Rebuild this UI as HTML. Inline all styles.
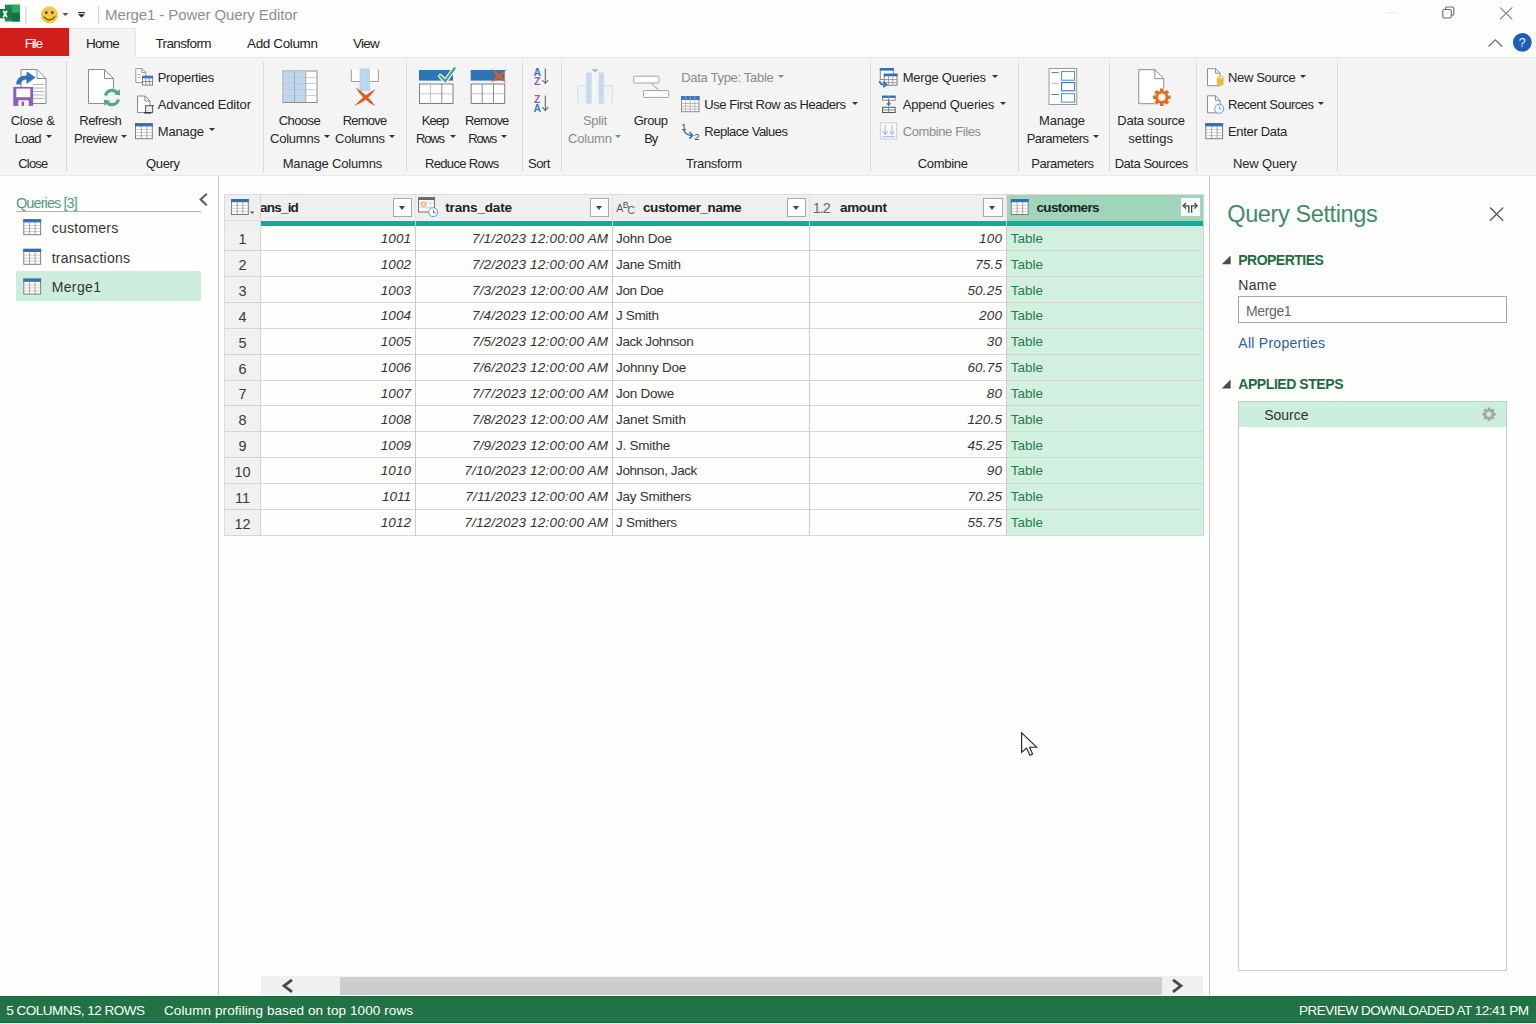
<!DOCTYPE html>
<html lang="en">
<head>
<meta charset="utf-8">
<title>Merge1 - Power Query Editor</title>
<style>
html,body{margin:0;padding:0;}
body{width:1536px;height:1024px;overflow:hidden;background:#fefefd;font-family:"Liberation Sans",sans-serif;position:relative;}
.a{position:absolute;}
.t{position:absolute;white-space:nowrap;line-height:20px;height:20px;}
.sep{position:absolute;top:62px;height:110px;width:1px;background:#dadada;}
.arr{position:absolute;width:0;height:0;border-left:3.2px solid transparent;border-right:3.2px solid transparent;border-top:3.6px solid #333;}
.arr.g{border-top-color:#4aa88a;}
.dd{position:absolute;top:197.5px;width:17.5px;height:17.5px;background:#fff;border:1px solid #a8a8a8;}
.dd:after{content:"";position:absolute;left:5.1px;top:7px;border-left:3.6px solid transparent;border-right:3.6px solid transparent;border-top:4px solid #444;}
.hl{position:absolute;left:224.5px;width:978.5px;height:1px;background:#d5d5d5;}
.vl{position:absolute;top:194px;width:1px;height:341.5px;background:#cccccc;}
svg{position:absolute;overflow:visible;}
</style>
</head>
<body>
<!-- title bar -->
<div class="a" id="titlebar" style="left:0;top:0;width:1536px;height:28px;background:#fefefd;"></div>
<!-- tabs row -->
<div class="a" style="left:0;top:28px;width:1536px;height:29px;background:#fefefd;"></div>
<!-- ribbon -->
<div class="a" id="ribbon" style="left:0;top:57px;width:1536px;height:119.2px;background:#f5f4f5;border-top:1px solid #e6e6e6;border-bottom:1.4px solid #e9e9e9;box-sizing:border-box;"></div>
<div class="a" id="filetab" style="left:0;top:28px;width:69px;height:28px;background:#d21e1a;"></div>
<div class="a" id="hometab" style="left:69px;top:28px;width:67.4px;height:30px;background:#f5f4f5;border:1px solid #e6e6e6;border-bottom:none;box-sizing:border-box;"></div>

<!-- ribbon separators -->
<div class="sep" style="left:66.3px"></div>
<div class="sep" style="left:262.9px"></div>
<div class="sep" style="left:405.9px"></div>
<div class="sep" style="left:521.8px"></div>
<div class="sep" style="left:560.5px"></div>
<div class="sep" style="left:870.3px"></div>
<div class="sep" style="left:1017.6px"></div>
<div class="sep" style="left:1109px"></div>
<div class="sep" style="left:1195.7px"></div>
<div class="sep" style="left:1337px"></div>

<!-- ribbon dropdown arrows -->
<div class="arr" style="left:45.7px;top:135.2px"></div>
<div class="arr" style="left:121.4px;top:135.2px"></div>
<div class="arr" style="left:208.5px;top:128.4px"></div>
<div class="arr" style="left:324.4px;top:135.2px"></div>
<div class="arr" style="left:389px;top:135.2px"></div>
<div class="arr" style="left:449.8px;top:135.2px"></div>
<div class="arr" style="left:501.4px;top:135.2px"></div>
<div class="arr g" style="left:615.3px;top:135.2px"></div>
<div class="arr g" style="left:778px;top:75px"></div>
<div class="arr" style="left:852px;top:102px"></div>
<div class="arr" style="left:992px;top:75px"></div>
<div class="arr" style="left:1000px;top:102px"></div>
<div class="arr" style="left:1093.3px;top:135.2px"></div>
<div class="arr" style="left:1300px;top:75px"></div>
<div class="arr" style="left:1318px;top:102px"></div>


<!-- left pane -->
<div class="a" style="left:16px;top:211.3px;width:184.6px;height:1px;background:#b3b3b3;"></div>
<div class="a" style="left:16px;top:271.4px;width:184.6px;height:29.4px;background:#cdeedd;"></div>
<div class="a" style="left:218px;top:176px;width:1.2px;height:819px;background:#c6c6c6;"></div>

<!-- grid -->
<div class="a" id="ghead" style="left:224.5px;top:194px;width:782px;height:31.5px;background:#efefef;"></div>
<div class="a" id="rownums" style="left:224.5px;top:225.5px;width:36px;height:310px;background:#f1f1f1;"></div>
<div class="a" id="selhead" style="left:1006.5px;top:194px;width:196.5px;height:27px;background:#9fd5b9;"></div>
<div class="a" id="selcol" style="left:1006.5px;top:225.5px;width:196.5px;height:310px;background:#d2f0e0;"></div>
<div class="a" id="tealbar" style="left:260.5px;top:220.8px;width:942.5px;height:5px;background:#06b09f;"></div>
<div class="hl" style="top:250.1px"></div>
<div class="hl" style="top:276.0px"></div>
<div class="hl" style="top:301.9px"></div>
<div class="hl" style="top:327.8px"></div>
<div class="hl" style="top:353.7px"></div>
<div class="hl" style="top:379.5px"></div>
<div class="hl" style="top:405.4px"></div>
<div class="hl" style="top:431.3px"></div>
<div class="hl" style="top:457.2px"></div>
<div class="hl" style="top:483.1px"></div>
<div class="hl" style="top:509.0px"></div>
<div class="hl" style="top:534.9px"></div>
<div class="vl" style="left:224px;background:#dadada"></div>
<div class="vl" style="left:260px;background:#d6d6d6"></div>
<div class="vl" style="left:415.0px;height:27px;background:#e2e2e2"></div>
<div class="vl" style="left:415.0px;top:221px;height:314.5px"></div>
<div class="vl" style="left:612.0px;height:27px;background:#e2e2e2"></div>
<div class="vl" style="left:612.0px;top:221px;height:314.5px"></div>
<div class="vl" style="left:809.0px;height:27px;background:#e2e2e2"></div>
<div class="vl" style="left:809.0px;top:221px;height:314.5px"></div>
<div class="vl" style="left:1006.0px;height:27px;background:#e2e2e2"></div>
<div class="vl" style="left:1006.0px;top:221px;height:314.5px"></div>
<div class="vl" style="left:1202.5px;background:#c3dccf"></div>
<div class="hl" style="top:220.3px;width:36px;background:#dcdcdc"></div>
<div class="hl" style="top:193.6px;background:#dcdcdc"></div>
<div class="dd" style="left:392.7px"></div>
<div class="dd" style="left:589.8px"></div>
<div class="dd" style="left:786.5px"></div>
<div class="dd" style="left:983.3px"></div>
<div class="a" style="left:1181px;top:197.5px;width:18.5px;height:18.5px;background:#fafdfb;"></div>

<!-- query settings pane -->
<div class="a" style="left:1208.8px;top:176px;width:1.2px;height:819px;background:#c6c6c8;"></div>
<div class="a" style="left:1238px;top:296px;width:268.5px;height:26.5px;box-sizing:border-box;border:1.5px solid #a6a6a6;background:#fff;"></div>
<div class="a" style="left:1238px;top:401px;width:268.5px;height:570px;box-sizing:border-box;border:1px solid #cbcbcb;background:#fff;"></div>
<div class="a" style="left:1239px;top:402px;width:266.5px;height:24.5px;background:#cdeedd;"></div>

<!-- scrollbar -->
<div class="a" style="left:260.5px;top:975.6px;width:942.5px;height:19.4px;background:#f0f0f0;"></div>
<div class="a" style="left:339.5px;top:976.6px;width:822px;height:18.4px;background:#cdcdcd;"></div>

<!-- status bar -->
<div class="a" id="status" style="left:0;top:996px;width:1536px;height:26.7px;background:#217346;border-top:1px solid #1b693d;border-bottom:1px solid #1b693d;box-sizing:border-box;"></div>

<svg width="1536" height="1024" viewBox="0 0 1536 1024" style="left:0;top:0;">



<!-- ===== ribbon icons ===== -->
<!-- Close & Load -->
<g transform="translate(20.5,69)"><path d="M0.5 0.5H16.5L25.5 9.5V34.5H0.5Z" fill="#fff" stroke="#8c8c8c" stroke-width="1"/>
<path d="M16.5 0.5V9.5H25.5" fill="none" stroke="#8c8c8c" stroke-width="1"/></g>
<path d="M33 84.5H44M33 88H44M33 91.5H44M33 95H44M33 98.5H44" stroke="#b5b5b5" stroke-width="1" fill="none"/>
<path d="M16.2 84.5Q16.5 75.5 26.5 75.5V71.3L35.6 77.6L26.5 84V79.6Q21.5 79.6 20.6 84.5Z" fill="#2e74b6"/>
<rect x="13.3" y="86.9" width="19.8" height="19" fill="#8f5cbf"/>
<rect x="16.3" y="88.6" width="14" height="8.6" fill="#fdfdfd"/>
<rect x="18.3" y="100.3" width="10.4" height="5.6" fill="#fdfdfd"/>
<rect x="21.5" y="101.5" width="2.6" height="4.4" fill="#8f5cbf"/>
<!-- Refresh Preview -->
<g transform="translate(88,69)"><path d="M0.5 0.5H16.5L25.5 9.5V34.5H0.5Z" fill="#fff" stroke="#8c8c8c" stroke-width="1"/>
<path d="M16.5 0.5V9.5H25.5" fill="none" stroke="#8c8c8c" stroke-width="1"/></g>
<circle cx="112" cy="97.5" r="9.3" fill="#f5f4f5"/>
<path d="M105.6 95.5A6.6 6.6 0 0 1 117 92.6" stroke="#4fa78c" stroke-width="3.2" fill="none"/>
<path d="M114.2 94.6L120.2 95.2L119.6 89Z" fill="#4fa78c"/>
<path d="M118.4 99.5A6.6 6.6 0 0 1 107 102.4" stroke="#4fa78c" stroke-width="3.2" fill="none"/>
<path d="M109.8 100.4L103.8 99.8L104.4 106Z" fill="#4fa78c"/>
<!-- Properties -->
<g transform="translate(135.3,68)">
<path d="M0.5 0.5H6.5L10.5 4.5V14.5H0.5Z" fill="#fdfdfd" stroke="#9a9a9a" stroke-width="1"/>
<path d="M6.5 0.5V4.5H10.5" fill="none" stroke="#9a9a9a"/>
<path d="M2.5 6.5H5M2.5 9.5H5" stroke="#aaa" fill="none"/>
<rect x="7.2" y="8.3" width="10" height="8.8" fill="#fff" stroke="#7f7f7f"/>
<rect x="6.7" y="7.8" width="11" height="2.6" fill="#3b78c4"/>
<path d="M7.2 13.5H17.2M10.5 10.4V17M14 10.4V17" stroke="#8c8c8c" fill="none"/>
</g>
<!-- Advanced Editor -->
<g transform="translate(137,95.5)">
<path d="M0.5 0.5H8L13 5.5V17H0.5Z" fill="#fdfdfd" stroke="#8a8a8a" stroke-width="1"/>
<path d="M8 0.5V5.5H13" fill="none" stroke="#8a8a8a"/>
<rect x="8.6" y="10.2" width="7" height="6.8" fill="#e9e9e9" stroke="#555" stroke-width="1"/>
<path d="M7.2 17.4H14" stroke="#333" stroke-width="1.4"/>
<path d="M14.6 10.2H17" stroke="#555"/>
</g>
<!-- Manage -->
<g transform="translate(135,123.2)"><rect x="0.5" y="0.5" width="16.8" height="15" fill="#fff" stroke="#7d7d7d" stroke-width="1"/>
<rect x="0" y="0" width="17.8" height="3.2" fill="#2f6fba"/>
<path d="M0.5 6.4H17M0.5 9.3H17M0.5 12.3H17" stroke="#c4c4c4" stroke-width="0.8" fill="none"/>
<path d="M6.3 3V15.5M11.8 3V15.5" stroke="#999" stroke-width="0.9" fill="none"/></g>


<!-- Choose Columns -->
<g>
<rect x="283" y="71" width="34" height="31.5" fill="#fff" stroke="#8c8c8c"/>
<rect x="283.5" y="71.5" width="22.3" height="30.5" fill="#bdd7ee"/>
<path d="M283 77.5H317M283 83.5H317M283 89.5H317M283 95.5H317" stroke="#c9c9c9" stroke-width="0.9" fill="none"/>
<path d="M294.5 71V102.5M305.8 71V102.5" stroke="#a8a8a8" stroke-width="0.9" fill="none"/>
</g>
<!-- Remove Columns -->
<g>
<path d="M351.3 69.5V81.5H378.3V69.5" fill="#fff" stroke="#9a9a9a"/>
<rect x="360" y="69" width="9.7" height="21.5" fill="#bdd7ee" stroke="#a9c4de" stroke-width="0.6"/>
<path d="M355.6 87.2Q362.6 99.7 375.4 106.2Q367.3 94.8 355.6 87.2ZM375.6 89.0Q363.6 95.7 354.4 105.8Q367.9 101.0 375.6 89.0Z" fill="#e1591c"/>
</g>
<!-- Keep Rows -->
<g>
<rect x="419" y="70" width="34" height="10.6" fill="#2e75b6"/>
<rect x="419.5" y="84" width="33.5" height="19.5" fill="#fff" stroke="#7f7f7f"/>
<path d="M419.5 93.8H453M430.5 84V103.5" stroke="#c2c2c2" fill="none"/><path d="M441.8 84V103.5" stroke="#8c8c8c" fill="none"/>
<path d="M440.3 76.2L445.3 81L454.6 68.3" stroke="#f7f7f7" stroke-width="4.6" fill="none" stroke-linecap="round" stroke-linejoin="round"/>
<path d="M440.3 76.2L445.3 81L454.6 68.3" stroke="#4fa78c" stroke-width="2.4" fill="none" stroke-linecap="round"/>
</g>
<!-- Remove Rows -->
<g>
<rect x="470.7" y="70" width="34" height="10.6" fill="#2e75b6"/>
<rect x="471.2" y="84" width="33.5" height="19.5" fill="#fff" stroke="#7f7f7f"/>
<path d="M471.2 93.8H504.7" stroke="#c2c2c2" fill="none"/><path d="M482.2 84V103.5M493.5 84V103.5" stroke="#8c8c8c" fill="none"/>
<path d="M491.6 68.8Q496.6 78.4 506.4 83.0Q500.7 74.1 491.6 68.8ZM506.4 69.6Q497.2 74.4 490.8 82.6Q501.0 79.0 506.4 69.6Z" fill="#e1591c"/>
</g>
<!-- Sort AZ / ZA -->
<g font-family="Liberation Sans, sans-serif" font-size="10.5" font-weight="bold" text-anchor="middle">
<text x="537.2" y="75.6" fill="#3c78c2">A</text>
<text x="537.2" y="84.8" fill="#8e5bbd">Z</text>
<text x="537.2" y="102.8" fill="#8e5bbd">Z</text>
<text x="537.2" y="112.2" fill="#3c78c2">A</text>
</g>
<path d="M545.3 68.5V83.3M542.4 80L545.3 83.5L548.2 80" stroke="#666" stroke-width="1.1" fill="none"/>
<path d="M545.3 95.5V110.5M542.4 107.2L545.3 110.7L548.2 107.2" stroke="#666" stroke-width="1.1" fill="none"/>
<!-- Split Column (disabled look) -->
<g>
<rect x="577.5" y="85.6" width="8.6" height="18.1" fill="#edf5f4"/>
<path d="M577.8 103.7V85.7H586" stroke="#cfdbe8" stroke-width="0.9" fill="none"/>
<rect x="603.8" y="85.6" width="8.6" height="18.1" fill="#edf5f4"/>
<path d="M603.8 85.7H612.3V103.7" stroke="#cfdbe8" stroke-width="0.9" fill="none"/>
<rect x="586.1" y="72.4" width="5.5" height="31.3" fill="#c8d8ef"/>
<rect x="598.7" y="72.4" width="5.1" height="31.3" fill="#c8d8ef"/>
<path d="M591.6 69.2H598.6L595.1 72.3Z" fill="#9fb3cc"/>
</g>
<!-- Group By -->
<g>
<rect x="633.7" y="76.2" width="25.2" height="6.8" rx="0.8" fill="#fff" stroke="#9a9a9a" stroke-width="0.9"/>
<rect x="643.5" y="90.6" width="25.2" height="6.8" rx="0.8" fill="#fff" stroke="#9a9a9a" stroke-width="0.9"/>
<path d="M651.5 83.3L658.7 90.3" stroke="#8c8c8c" stroke-width="0.9" fill="none"/>
</g>
<!-- Use first row as headers -->
<g transform="translate(681,96)">
<rect x="0.5" y="0.5" width="17.5" height="15.2" fill="#fff" stroke="#8a8a8a"/>
<rect x="0" y="0" width="18.5" height="4" fill="#3b78c4"/>
<path d="M0 7.5H18M0 10.3H18M0 13H18M4.7 0V15.5M9.2 0V15.5M13.8 0V15.5" stroke="#a8a8a8" stroke-width="0.8" fill="none"/>
</g>
<!-- Replace values -->
<g font-family="Liberation Sans, sans-serif" font-size="9.5" fill="#444">
<text x="681.3" y="130">1</text>
<text x="694.3" y="140">2</text>
</g>
<path d="M684 129.5Q684.5 135 691.8 135.4" stroke="#2e75b6" stroke-width="1.5" fill="none"/>
<path d="M689.3 132L692.8 135.4L689.3 138.6" stroke="#2e75b6" stroke-width="1.5" fill="none"/>


<!-- Merge Queries -->
<g>
<rect x="880.3" y="68.5" width="13" height="11" fill="#fff" stroke="#8a8a8a"/>
<rect x="879.8" y="68" width="14" height="2.6" fill="#2f6fba"/>
<rect x="884.3" y="74.2" width="12.7" height="11" fill="#fff" stroke="#7a7a7a"/>
<rect x="883.8" y="73.7" width="13.7" height="2.6" fill="#2f6fba"/>
<path d="M884.3 79.5H897M884.3 82.5H897M888.5 76.3V85.2M892.8 76.3V85.2" stroke="#9a9a9a" stroke-width="0.9" fill="none"/>
<path d="M879.6 80.8Q880 84.6 884.5 84.6" stroke="#2f6fba" stroke-width="1.7" fill="none"/>
<path d="M883.2 81.8L886.6 84.6L883.2 87.2" stroke="#2f6fba" stroke-width="1.6" fill="none"/>
</g>
<!-- Append Queries -->
<g>
<rect x="882.5" y="96.2" width="12.6" height="4" fill="#fff" stroke="#8a8a8a"/>
<rect x="882" y="95.7" width="13.6" height="2.2" fill="#2f6fba"/>
<path d="M888.7 96V100.5" stroke="#8a8a8a" fill="none"/>
<path d="M888.7 100.5V105" stroke="#2f6fba" stroke-width="1.4" fill="none"/>
<path d="M886.3 103.3H891.1L888.7 106.2Z" fill="#2f6fba"/>
<rect x="882.5" y="107.3" width="12.6" height="5.2" fill="#fff" stroke="#555"/>
<path d="M882.5 110H895M888.7 107.3V112.5" stroke="#777" stroke-width="0.9" fill="none"/>
</g>
<!-- Combine Files -->
<g>
<rect x="880.4" y="122.7" width="16.3" height="16.3" fill="#f8fafc" stroke="#c0d2e6"/>
<path d="M885.2 125.3V134M891.9 125.3V134" stroke="#a9c0da" stroke-width="1.2" fill="none"/>
<path d="M882.8 131.5L885.2 134.3L887.6 131.5M889.5 131.5L891.9 134.3L894.3 131.5" stroke="#a9c0da" stroke-width="1.2" fill="none"/>
<path d="M882.3 136.7H894.8" stroke="#a9c0da" stroke-width="1.2"/>
</g>
<!-- Manage Parameters -->
<g>
<rect x="1049" y="68.5" width="27.7" height="36" fill="#fff" stroke="#9a9a9a"/>
<rect x="1061.6" y="71.6" width="13" height="8.6" fill="#fff" stroke="#4a8ad0" stroke-width="1"/>
<rect x="1061.6" y="82.6" width="13" height="8.2" fill="#fff" stroke="#3b78c4" stroke-width="1.1"/>
<rect x="1061.6" y="93.7" width="13" height="8.4" fill="#fff" stroke="#4a8ad0" stroke-width="1"/>
<path d="M1051.4 72.6H1058.8M1051.4 94.5H1058.8" stroke="#777" fill="none"/>
<path d="M1051.4 83.4H1058.8" stroke="#bbb" fill="none"/>
</g>
<!-- Data source settings -->
<g transform="translate(1138.3,69.2)"><path d="M0.5 0.5H16.5L25.5 9.5V34.5H0.5Z" fill="#fff" stroke="#8c8c8c" stroke-width="1"/>
<path d="M16.5 0.5V9.5H25.5" fill="none" stroke="#8c8c8c" stroke-width="1"/></g>
<circle cx="1161.8" cy="97.3" r="9.6" fill="#f5f4f5"/>
<path d="M1168.12 95.41L1170.53 95.56L1170.53 99.04L1168.12 99.19L1167.61 100.43L1169.20 102.24L1166.74 104.70L1164.93 103.11L1163.69 103.62L1163.54 106.03L1160.06 106.03L1159.91 103.62L1158.67 103.11L1156.86 104.70L1154.40 102.24L1155.99 100.43L1155.48 99.19L1153.07 99.04L1153.07 95.56L1155.48 95.41L1155.99 94.17L1154.40 92.36L1156.86 89.90L1158.67 91.49L1159.91 90.98L1160.06 88.57L1163.54 88.57L1163.69 90.98L1164.93 91.49L1166.74 89.90L1169.20 92.36L1167.61 94.17ZM1165.50 97.30A3.70 3.70 0 1 0 1158.10 97.30A3.70 3.70 0 1 0 1165.50 97.30Z" fill="#e0701f" fill-rule="evenodd"/>
<!-- New Source -->
<g transform="translate(1207,68.2)"><path d="M0.5 0.5H8.5L13 5V17.5H0.5Z" fill="#fff" stroke="#8c8c8c" stroke-width="1"/>
<path d="M8.5 0.5V5H13" fill="none" stroke="#8c8c8c" stroke-width="1"/></g>
<path d="M1216.8 77.2V84.6Q1220.2 86.6 1223.6 84.6V77.2Q1220.2 75.2 1216.8 77.2Z" fill="#f2b83a"/>
<ellipse cx="1220.2" cy="77.4" rx="3.4" ry="1.4" fill="#f7d37a"/>
<!-- Recent Sources -->
<g transform="translate(1207,95.3)"><path d="M0.5 0.5H8.5L13 5V17.5H0.5Z" fill="#fff" stroke="#8c8c8c" stroke-width="1"/>
<path d="M8.5 0.5V5H13" fill="none" stroke="#8c8c8c" stroke-width="1"/></g>
<circle cx="1219.2" cy="108.8" r="4.5" fill="#fff" stroke="#6fa0d6" stroke-width="1.1"/>
<path d="M1219.2 106V109H1221.6" stroke="#6fa0d6" stroke-width="1" fill="none"/>
<!-- Enter Data -->
<g transform="translate(1205.3,123.2)"><rect x="0.5" y="0.5" width="16.8" height="15" fill="#fff" stroke="#7d7d7d" stroke-width="1"/>
<rect x="0" y="0" width="17.8" height="3.2" fill="#2f6fba"/>
<path d="M0.5 6.4H17M0.5 9.3H17M0.5 12.3H17" stroke="#c4c4c4" stroke-width="0.8" fill="none"/>
<path d="M6.3 3V15.5M11.8 3V15.5" stroke="#999" stroke-width="0.9" fill="none"/></g>

<!-- ===== title bar ===== -->
<g id="xl">
<rect x="5" y="4.7" width="14.8" height="16.8" fill="#1d8a50"/>
<rect x="12" y="4.7" width="7.8" height="8" fill="#2fa86a"/>
<rect x="12" y="12.7" width="7.8" height="8.8" fill="#16703f"/>
<rect x="0" y="9" width="11.8" height="9.3" fill="#117a43"/>
<path d="M3.2 10.8L7 17.2M7 10.8L3.2 17.2" stroke="#fff" stroke-width="1.7" fill="none"/>
</g>
<rect x="25.3" y="6" width="1.2" height="17.5" fill="#c9d3da"/>
<rect x="98" y="6" width="1.2" height="17.5" fill="#c9d3da"/>
<g id="smiley">
<circle cx="49.4" cy="15" r="8.5" fill="#f6c63f"/>
<ellipse cx="46.3" cy="12.6" rx="1.3" ry="1.6" fill="#3b4d6b"/>
<ellipse cx="52.3" cy="12.6" rx="1.3" ry="1.6" fill="#3b4d6b"/>
<path d="M43.6 16.6Q49.4 23 55.2 16.6" stroke="#5a5030" stroke-width="1.2" fill="none"/>
</g>
<path d="M62.3 13L68.4 13L65.35 16Z" fill="#445a50"/>
<rect x="78" y="12" width="7" height="1.2" fill="#333"/>
<path d="M78 14.2L85 14.2L81.5 17.6Z" fill="#222"/>
<!-- window controls -->
<rect x="1386.5" y="12.3" width="12" height="1" fill="#e3e3e3"/>
<rect x="1442.8" y="9.5" width="8.5" height="8.5" rx="1.5" fill="none" stroke="#6a6a6a" stroke-width="1.1"/>
<path d="M1445.5 9.3V8.2Q1445.5 7 1446.8 7H1452.3Q1453.8 7 1453.8 8.5V14Q1453.8 15.2 1452.5 15.2H1451.5" fill="none" stroke="#6a6a6a" stroke-width="1.1"/>
<path d="M1500 7.3L1512.3 19.3M1512.3 7.3L1500 19.3" stroke="#7c7c7c" stroke-width="1.05" fill="none"/>
<!-- collapse + help -->
<path d="M1488.5 46.5L1495.3 39.8L1502.2 46.5" stroke="#6c6c6c" stroke-width="1.3" fill="none"/>
<circle cx="1522.3" cy="42.3" r="9.4" fill="#1b5fb8"/>
<text x="1522.3" y="47" font-family="Liberation Sans, sans-serif" font-size="12.5" fill="#f4f7fb" text-anchor="middle">?</text>

<!-- ===== left pane icons ===== -->
<path d="M206.8 193.8L200.6 199.5L206.8 205.2" stroke="#595959" stroke-width="2" fill="none"/>
<g transform="translate(23.3,219.2)"><rect x="0.5" y="0.5" width="16.8" height="15" fill="#fff" stroke="#7d7d7d" stroke-width="1"/>
<rect x="0" y="0" width="17.8" height="3.2" fill="#2f6fba"/>
<path d="M0.5 6.4H17M0.5 9.3H17M0.5 12.3H17" stroke="#c4c4c4" stroke-width="0.8" fill="none"/>
<path d="M6.3 3V15.5M11.8 3V15.5" stroke="#999" stroke-width="0.9" fill="none"/></g>
<g transform="translate(23.3,248.8)"><rect x="0.5" y="0.5" width="16.8" height="15" fill="#fff" stroke="#7d7d7d" stroke-width="1"/>
<rect x="0" y="0" width="17.8" height="3.2" fill="#2f6fba"/>
<path d="M0.5 6.4H17M0.5 9.3H17M0.5 12.3H17" stroke="#c4c4c4" stroke-width="0.8" fill="none"/>
<path d="M6.3 3V15.5M11.8 3V15.5" stroke="#999" stroke-width="0.9" fill="none"/></g>
<g transform="translate(23.3,278.6)"><rect x="0.5" y="0.5" width="16.8" height="15" fill="#fff" stroke="#7d7d7d" stroke-width="1"/>
<rect x="0" y="0" width="17.8" height="3.2" fill="#2f6fba"/>
<path d="M0.5 6.4H17M0.5 9.3H17M0.5 12.3H17" stroke="#c4c4c4" stroke-width="0.8" fill="none"/>
<path d="M6.3 3V15.5M11.8 3V15.5" stroke="#999" stroke-width="0.9" fill="none"/></g>
<!-- ===== grid header icons ===== -->
<g transform="translate(231,199)"><rect x="0.5" y="0.5" width="16.8" height="15" fill="#fff" stroke="#7d7d7d" stroke-width="1"/>
<rect x="0" y="0" width="17.8" height="3.2" fill="#2f6fba"/>
<path d="M0.5 6.4H17M0.5 9.3H17M0.5 12.3H17" stroke="#c4c4c4" stroke-width="0.8" fill="none"/>
<path d="M6.3 3V15.5M11.8 3V15.5" stroke="#999" stroke-width="0.9" fill="none"/></g>
<path d="M249.8 211.6H254.6L252.2 214Z" fill="#5a5a5a"/>
<!-- calendar + clock -->
<g>
<rect x="418.6" y="197.8" width="15.8" height="14.2" fill="#fff" stroke="#6e6e6e"/>
<rect x="418.1" y="197.3" width="16.8" height="2.7" fill="#666"/>
<path d="M426.6 200.5V211.5M430.5 200.5V211.5M419 203H434M419 207.5H434" stroke="#d3d3d3" stroke-width="0.8" fill="none"/>
<circle cx="423.5" cy="204.3" r="2" fill="none" stroke="#f0a23a" stroke-width="1.1"/>
<circle cx="433.2" cy="212.2" r="4.4" fill="#fdfdfd" stroke="#6aa5dc" stroke-width="1.1"/>
<path d="M433.4 209.6V212.6H435.6" stroke="#777" stroke-width="1" fill="none"/>
</g>
<!-- ABC -->
<g font-family="Liberation Sans, sans-serif" fill="#555">
<text x="616.2" y="212.3" font-size="10.5">A</text>
<text x="622.8" y="208.2" font-size="9">B</text>
<text x="627.6" y="213.8" font-size="10">C</text>
</g>
<!-- customers col table icon -->
<g transform="translate(1010.8,199)"><rect x="0.5" y="0.5" width="16.8" height="15" fill="#fff" stroke="#7d7d7d" stroke-width="1"/>
<rect x="0" y="0" width="17.8" height="3.2" fill="#2f6fba"/>
<path d="M0.5 6.4H17M0.5 9.3H17M0.5 12.3H17" stroke="#c4c4c4" stroke-width="0.8" fill="none"/>
<path d="M6.3 3V15.5M11.8 3V15.5" stroke="#999" stroke-width="0.9" fill="none"/></g>
<!-- expand icon -->
<g stroke="#444" stroke-width="1.3" fill="none">
<path d="M1188.8 212.8V205.8H1183.6"/>
<path d="M1186 203L1183.2 205.8L1186 208.6"/>
<path d="M1191.6 212.8V205.8H1196.8"/>
<path d="M1194.4 203L1197.2 205.8L1194.4 208.6"/>
</g>
<!-- ===== query settings icons ===== -->
<path d="M1490 207.6L1503.2 220.8M1503.2 207.6L1490 220.8" stroke="#5c5c5c" stroke-width="1.4" fill="none"/>
<path d="M1230.6 255.4V264.3H1221.8Z" fill="#4a4a4a"/>
<path d="M1230.6 379.6V388.5H1221.8Z" fill="#4a4a4a"/>
<!-- ===== scrollbar arrows ===== -->
<path d="M292 979.8L284 985.8L292 991.8" stroke="#47474d" stroke-width="2.8" fill="none"/>
<path d="M1173 979.8L1181 985.8L1173 991.8" stroke="#47474d" stroke-width="2.8" fill="none"/>
<!-- ===== mouse cursor ===== -->
<path d="M1021.6 732.8V752.2L1026.6 748.1L1029.9 755.2L1032.6 754L1029.6 747.2H1036.6Z" fill="#fff" stroke="#262626" stroke-width="1.15" stroke-linejoin="miter"/>

<!-- gear in steps -->
<path d="M1493.79 412.77L1495.67 412.87L1495.67 415.53L1493.79 415.63L1493.40 416.57L1494.65 417.98L1492.78 419.85L1491.37 418.60L1490.43 418.99L1490.33 420.87L1487.67 420.87L1487.57 418.99L1486.63 418.60L1485.22 419.85L1483.35 417.98L1484.60 416.57L1484.21 415.63L1482.33 415.53L1482.33 412.87L1484.21 412.77L1484.60 411.83L1483.35 410.42L1485.22 408.55L1486.63 409.80L1487.57 409.41L1487.67 407.53L1490.33 407.53L1490.43 409.41L1491.37 409.80L1492.78 408.55L1494.65 410.42L1493.40 411.83ZM1491.60 414.20A2.60 2.60 0 1 0 1486.40 414.20A2.60 2.60 0 1 0 1491.60 414.20Z" fill="#a4a4a4" fill-rule="evenodd"/>
</svg>

<div class="a" style="left:260.8px;top:196px;width:60px;height:22px;overflow:hidden;"><div class="t" style="left:-8.9px;top:2px;font-size:13.5px;font-weight:bold;color:#222;letter-spacing:-0.8px;">trans_id</div></div>
<div class="t" id="t0" style="left:105.0px;top:5px;font-size:15px;color:#8e8e8e;letter-spacing:-0.099px;">Merge1 - Power Query Editor</div>
<div class="t" id="t1" style="left:24.7px;top:34px;font-size:13.5px;color:#ffffff;letter-spacing:-1.155px;">File</div>
<div class="t" id="t2" style="left:86.0px;top:34px;font-size:13.5px;color:#222;letter-spacing:-0.739px;">Home</div>
<div class="t" id="t3" style="left:155.5px;top:34px;font-size:13.5px;color:#222;letter-spacing:-0.627px;">Transform</div>
<div class="t" id="t4" style="left:247.0px;top:34px;font-size:13.5px;color:#222;letter-spacing:-0.366px;">Add Column</div>
<div class="t" id="t5" style="left:353.0px;top:34px;font-size:13.5px;color:#222;letter-spacing:-0.777px;">View</div>
<div class="t" id="t6" style="left:10.7px;top:111px;font-size:13px;color:#262626;letter-spacing:-0.205px;">Close &amp;</div>
<div class="t" id="t7" style="left:14.6px;top:129px;font-size:13px;color:#262626;letter-spacing:-0.674px;">Load</div>
<div class="t" id="t8" style="left:18.3px;top:154px;font-size:13px;color:#262626;letter-spacing:-0.813px;">Close</div>
<div class="t" id="t9" style="left:79.3px;top:111px;font-size:13px;color:#262626;letter-spacing:-0.522px;">Refresh</div>
<div class="t" id="t10" style="left:74.0px;top:129px;font-size:13px;color:#262626;letter-spacing:-0.492px;">Preview</div>
<div class="t" id="t11" style="left:157.7px;top:68px;font-size:13px;color:#262626;letter-spacing:-0.294px;">Properties</div>
<div class="t" id="t12" style="left:157.7px;top:95px;font-size:13px;color:#262626;letter-spacing:-0.150px;">Advanced Editor</div>
<div class="t" id="t13" style="left:157.7px;top:122px;font-size:13px;color:#262626;letter-spacing:-0.137px;">Manage</div>
<div class="t" id="t14" style="left:146.0px;top:154px;font-size:13px;color:#262626;letter-spacing:-0.352px;">Query</div>
<div class="t" id="t15" style="left:278.7px;top:111px;font-size:13px;color:#262626;letter-spacing:-0.562px;">Choose</div>
<div class="t" id="t16" style="left:270.0px;top:129px;font-size:13px;color:#262626;letter-spacing:-0.216px;">Columns</div>
<div class="t" id="t17" style="left:342.7px;top:111px;font-size:13px;color:#262626;letter-spacing:-0.764px;">Remove</div>
<div class="t" id="t18" style="left:335.0px;top:129px;font-size:13px;color:#262626;letter-spacing:-0.216px;">Columns</div>
<div class="t" id="t19" style="left:282.7px;top:154px;font-size:13px;color:#262626;letter-spacing:-0.176px;">Manage Columns</div>
<div class="t" id="t20" style="left:421.7px;top:111px;font-size:13px;color:#262626;letter-spacing:-0.925px;">Keep</div>
<div class="t" id="t21" style="left:416.0px;top:129px;font-size:13px;color:#262626;letter-spacing:-1.172px;">Rows</div>
<div class="t" id="t22" style="left:465.0px;top:111px;font-size:13px;color:#262626;letter-spacing:-0.824px;">Remove</div>
<div class="t" id="t23" style="left:468.3px;top:129px;font-size:13px;color:#262626;letter-spacing:-1.200px;">Rows</div>
<div class="t" id="t24" style="left:425.0px;top:154px;font-size:13px;color:#262626;letter-spacing:-0.664px;">Reduce Rows</div>
<div class="t" id="t25" style="left:528.0px;top:154px;font-size:13px;color:#262626;letter-spacing:-0.515px;">Sort</div>
<div class="t" id="t26" style="left:583.0px;top:111px;font-size:13px;color:#8a8a8a;letter-spacing:-0.324px;">Split</div>
<div class="t" id="t27" style="left:568.0px;top:129px;font-size:13px;color:#8a8a8a;letter-spacing:-0.159px;">Column</div>
<div class="t" id="t28" style="left:633.7px;top:111px;font-size:13px;color:#262626;letter-spacing:-0.460px;">Group</div>
<div class="t" id="t29" style="left:644.3px;top:129px;font-size:13px;color:#262626;letter-spacing:-1.200px;">By</div>
<div class="t" id="t30" style="left:681.3px;top:68px;font-size:13px;color:#8a8a8a;letter-spacing:-0.313px;">Data Type: Table</div>
<div class="t" id="t31" style="left:704.3px;top:95px;font-size:13px;color:#262626;letter-spacing:-0.436px;">Use First Row as Headers</div>
<div class="t" id="t32" style="left:704.3px;top:122px;font-size:13px;color:#262626;letter-spacing:-0.492px;">Replace Values</div>
<div class="t" id="t33" style="left:686.0px;top:154px;font-size:13px;color:#262626;letter-spacing:-0.344px;">Transform</div>
<div class="t" id="t34" style="left:902.7px;top:68px;font-size:13px;color:#262626;letter-spacing:-0.224px;">Merge Queries</div>
<div class="t" id="t35" style="left:902.7px;top:95px;font-size:13px;color:#262626;letter-spacing:-0.181px;">Append Queries</div>
<div class="t" id="t36" style="left:902.7px;top:122px;font-size:13px;color:#8a8a8a;letter-spacing:-0.399px;">Combine Files</div>
<div class="t" id="t37" style="left:917.7px;top:154px;font-size:13px;color:#262626;letter-spacing:-0.289px;">Combine</div>
<div class="t" id="t38" style="left:1039.0px;top:111px;font-size:13px;color:#262626;letter-spacing:-0.197px;">Manage</div>
<div class="t" id="t39" style="left:1026.7px;top:129px;font-size:13px;color:#262626;letter-spacing:-0.545px;">Parameters</div>
<div class="t" id="t40" style="left:1031.3px;top:154px;font-size:13px;color:#262626;letter-spacing:-0.500px;">Parameters</div>
<div class="t" id="t41" style="left:1117.3px;top:111px;font-size:13px;color:#262626;letter-spacing:-0.239px;">Data source</div>
<div class="t" id="t42" style="left:1128.3px;top:129px;font-size:13px;color:#262626;letter-spacing:-0.016px;">settings</div>
<div class="t" id="t43" style="left:1114.7px;top:154px;font-size:13px;color:#262626;letter-spacing:-0.470px;">Data Sources</div>
<div class="t" id="t44" style="left:1228.0px;top:68px;font-size:13px;color:#262626;letter-spacing:-0.346px;">New Source</div>
<div class="t" id="t45" style="left:1228.0px;top:95px;font-size:13px;color:#262626;letter-spacing:-0.500px;">Recent Sources</div>
<div class="t" id="t46" style="left:1228.0px;top:122px;font-size:13px;color:#262626;letter-spacing:-0.317px;">Enter Data</div>
<div class="t" id="t47" style="left:1233.0px;top:154px;font-size:13px;color:#262626;letter-spacing:-0.166px;">New Query</div>
<div class="t" id="t48" style="left:16.0px;top:193px;font-size:14.5px;color:#4f9d80;letter-spacing:-0.912px;">Queries [3]</div>
<div class="t" id="t49" style="left:51.7px;top:218px;font-size:14px;color:#333;letter-spacing:0.253px;">customers</div>
<div class="t" id="t50" style="left:51.7px;top:248px;font-size:14px;color:#333;letter-spacing:0.256px;">transactions</div>
<div class="t" id="t51" style="left:51.7px;top:277px;font-size:14px;color:#333;letter-spacing:0.366px;">Merge1</div>
<div class="t" id="t52" style="left:643.0px;top:198px;font-size:13.5px;color:#222;letter-spacing:-0.412px;font-weight:bold;">customer_name</div>
<div class="t" id="t53" style="left:445.3px;top:198px;font-size:13.5px;color:#222;letter-spacing:-0.176px;font-weight:bold;">trans_date</div>
<div class="t" id="t54" style="left:840.0px;top:198px;font-size:13.5px;color:#222;letter-spacing:-0.350px;font-weight:bold;">amount</div>
<div class="t" id="t55" style="left:1036.5px;top:198px;font-size:13.5px;color:#222;letter-spacing:-0.648px;font-weight:bold;">customers</div>
<div class="t" id="t56" style="left:812.8px;top:198px;font-size:14.5px;color:#6a6a6a;letter-spacing:-1.086px;">1.2</div>
<div class="t" id="t57" style="top:229px;font-size:14.5px;color:#3a3a3a;letter-spacing:0.000px;left:224.5px;width:36px;text-align:center;">1</div>
<div class="t" id="t58" style="right:1125.1px;top:229px;font-size:13.5px;color:#333;letter-spacing:0.000px;font-style:italic;">1001</div>
<div class="t" id="t59" style="right:927.7px;top:229px;font-size:13.5px;color:#333;letter-spacing:0.200px;font-style:italic;">7/1/2023 12:00:00 AM</div>
<div class="t" id="t60" style="left:616.1px;top:229px;font-size:13.5px;color:#333;letter-spacing:-0.285px;">John Doe</div>
<div class="t" id="t61" style="right:533.8px;top:229px;font-size:13.5px;color:#333;letter-spacing:0.200px;font-style:italic;">100</div>
<div class="t" id="t62" style="left:1010.8px;top:229px;font-size:13.5px;color:#2a7a50;letter-spacing:-0.020px;">Table</div>
<div class="t" id="t63" style="top:255px;font-size:14.5px;color:#3a3a3a;letter-spacing:0.000px;left:224.5px;width:36px;text-align:center;">2</div>
<div class="t" id="t64" style="right:1125.1px;top:255px;font-size:13.5px;color:#333;letter-spacing:0.000px;font-style:italic;">1002</div>
<div class="t" id="t65" style="right:927.7px;top:255px;font-size:13.5px;color:#333;letter-spacing:0.200px;font-style:italic;">7/2/2023 12:00:00 AM</div>
<div class="t" id="t66" style="left:616.1px;top:255px;font-size:13.5px;color:#333;letter-spacing:-0.283px;">Jane Smith</div>
<div class="t" id="t67" style="right:533.8px;top:255px;font-size:13.5px;color:#333;letter-spacing:0.200px;font-style:italic;">75.5</div>
<div class="t" id="t68" style="left:1010.8px;top:255px;font-size:13.5px;color:#2a7a50;letter-spacing:-0.020px;">Table</div>
<div class="t" id="t69" style="top:281px;font-size:14.5px;color:#3a3a3a;letter-spacing:0.000px;left:224.5px;width:36px;text-align:center;">3</div>
<div class="t" id="t70" style="right:1125.1px;top:281px;font-size:13.5px;color:#333;letter-spacing:0.000px;font-style:italic;">1003</div>
<div class="t" id="t71" style="right:927.7px;top:281px;font-size:13.5px;color:#333;letter-spacing:0.200px;font-style:italic;">7/3/2023 12:00:00 AM</div>
<div class="t" id="t72" style="left:616.1px;top:281px;font-size:13.5px;color:#333;letter-spacing:-0.433px;">Jon Doe</div>
<div class="t" id="t73" style="right:533.8px;top:281px;font-size:13.5px;color:#333;letter-spacing:0.200px;font-style:italic;">50.25</div>
<div class="t" id="t74" style="left:1010.8px;top:281px;font-size:13.5px;color:#2a7a50;letter-spacing:-0.020px;">Table</div>
<div class="t" id="t75" style="top:307px;font-size:14.5px;color:#3a3a3a;letter-spacing:0.000px;left:224.5px;width:36px;text-align:center;">4</div>
<div class="t" id="t76" style="right:1125.1px;top:306px;font-size:13.5px;color:#333;letter-spacing:0.000px;font-style:italic;">1004</div>
<div class="t" id="t77" style="right:927.7px;top:306px;font-size:13.5px;color:#333;letter-spacing:0.200px;font-style:italic;">7/4/2023 12:00:00 AM</div>
<div class="t" id="t78" style="left:616.1px;top:306px;font-size:13.5px;color:#333;letter-spacing:-0.369px;">J Smith</div>
<div class="t" id="t79" style="right:533.8px;top:306px;font-size:13.5px;color:#333;letter-spacing:0.200px;font-style:italic;">200</div>
<div class="t" id="t80" style="left:1010.8px;top:306px;font-size:13.5px;color:#2a7a50;letter-spacing:-0.020px;">Table</div>
<div class="t" id="t81" style="top:333px;font-size:14.5px;color:#3a3a3a;letter-spacing:0.000px;left:224.5px;width:36px;text-align:center;">5</div>
<div class="t" id="t82" style="right:1125.1px;top:332px;font-size:13.5px;color:#333;letter-spacing:0.000px;font-style:italic;">1005</div>
<div class="t" id="t83" style="right:927.7px;top:332px;font-size:13.5px;color:#333;letter-spacing:0.200px;font-style:italic;">7/5/2023 12:00:00 AM</div>
<div class="t" id="t84" style="left:616.1px;top:332px;font-size:13.5px;color:#333;letter-spacing:-0.451px;">Jack Johnson</div>
<div class="t" id="t85" style="right:533.8px;top:332px;font-size:13.5px;color:#333;letter-spacing:0.200px;font-style:italic;">30</div>
<div class="t" id="t86" style="left:1010.8px;top:332px;font-size:13.5px;color:#2a7a50;letter-spacing:-0.020px;">Table</div>
<div class="t" id="t87" style="top:359px;font-size:14.5px;color:#3a3a3a;letter-spacing:0.000px;left:224.5px;width:36px;text-align:center;">6</div>
<div class="t" id="t88" style="right:1125.1px;top:358px;font-size:13.5px;color:#333;letter-spacing:0.000px;font-style:italic;">1006</div>
<div class="t" id="t89" style="right:927.7px;top:358px;font-size:13.5px;color:#333;letter-spacing:0.200px;font-style:italic;">7/6/2023 12:00:00 AM</div>
<div class="t" id="t90" style="left:616.1px;top:358px;font-size:13.5px;color:#333;letter-spacing:-0.196px;">Johnny Doe</div>
<div class="t" id="t91" style="right:533.8px;top:358px;font-size:13.5px;color:#333;letter-spacing:0.200px;font-style:italic;">60.75</div>
<div class="t" id="t92" style="left:1010.8px;top:358px;font-size:13.5px;color:#2a7a50;letter-spacing:-0.020px;">Table</div>
<div class="t" id="t93" style="top:384px;font-size:14.5px;color:#3a3a3a;letter-spacing:0.000px;left:224.5px;width:36px;text-align:center;">7</div>
<div class="t" id="t94" style="right:1125.1px;top:384px;font-size:13.5px;color:#333;letter-spacing:0.000px;font-style:italic;">1007</div>
<div class="t" id="t95" style="right:927.7px;top:384px;font-size:13.5px;color:#333;letter-spacing:0.200px;font-style:italic;">7/7/2023 12:00:00 AM</div>
<div class="t" id="t96" style="left:616.1px;top:384px;font-size:13.5px;color:#333;letter-spacing:-0.264px;">Jon Dowe</div>
<div class="t" id="t97" style="right:533.8px;top:384px;font-size:13.5px;color:#333;letter-spacing:0.200px;font-style:italic;">80</div>
<div class="t" id="t98" style="left:1010.8px;top:384px;font-size:13.5px;color:#2a7a50;letter-spacing:-0.020px;">Table</div>
<div class="t" id="t99" style="top:410px;font-size:14.5px;color:#3a3a3a;letter-spacing:0.000px;left:224.5px;width:36px;text-align:center;">8</div>
<div class="t" id="t100" style="right:1125.1px;top:410px;font-size:13.5px;color:#333;letter-spacing:0.000px;font-style:italic;">1008</div>
<div class="t" id="t101" style="right:927.7px;top:410px;font-size:13.5px;color:#333;letter-spacing:0.200px;font-style:italic;">7/8/2023 12:00:00 AM</div>
<div class="t" id="t102" style="left:616.1px;top:410px;font-size:13.5px;color:#333;letter-spacing:-0.140px;">Janet Smith</div>
<div class="t" id="t103" style="right:533.8px;top:410px;font-size:13.5px;color:#333;letter-spacing:0.200px;font-style:italic;">120.5</div>
<div class="t" id="t104" style="left:1010.8px;top:410px;font-size:13.5px;color:#2a7a50;letter-spacing:-0.020px;">Table</div>
<div class="t" id="t105" style="top:436px;font-size:14.5px;color:#3a3a3a;letter-spacing:0.000px;left:224.5px;width:36px;text-align:center;">9</div>
<div class="t" id="t106" style="right:1125.1px;top:436px;font-size:13.5px;color:#333;letter-spacing:0.000px;font-style:italic;">1009</div>
<div class="t" id="t107" style="right:927.7px;top:436px;font-size:13.5px;color:#333;letter-spacing:0.200px;font-style:italic;">7/9/2023 12:00:00 AM</div>
<div class="t" id="t108" style="left:616.1px;top:436px;font-size:13.5px;color:#333;letter-spacing:-0.273px;">J. Smithe</div>
<div class="t" id="t109" style="right:533.8px;top:436px;font-size:13.5px;color:#333;letter-spacing:0.200px;font-style:italic;">45.25</div>
<div class="t" id="t110" style="left:1010.8px;top:436px;font-size:13.5px;color:#2a7a50;letter-spacing:-0.020px;">Table</div>
<div class="t" id="t111" style="top:462px;font-size:14.5px;color:#3a3a3a;letter-spacing:0.000px;left:224.5px;width:36px;text-align:center;">10</div>
<div class="t" id="t112" style="right:1125.1px;top:461px;font-size:13.5px;color:#333;letter-spacing:0.000px;font-style:italic;">1010</div>
<div class="t" id="t113" style="right:927.7px;top:461px;font-size:13.5px;color:#333;letter-spacing:0.200px;font-style:italic;">7/10/2023 12:00:00 AM</div>
<div class="t" id="t114" style="left:616.1px;top:461px;font-size:13.5px;color:#333;letter-spacing:-0.426px;">Johnson, Jack</div>
<div class="t" id="t115" style="right:533.8px;top:461px;font-size:13.5px;color:#333;letter-spacing:0.200px;font-style:italic;">90</div>
<div class="t" id="t116" style="left:1010.8px;top:461px;font-size:13.5px;color:#2a7a50;letter-spacing:-0.020px;">Table</div>
<div class="t" id="t117" style="top:488px;font-size:14.5px;color:#3a3a3a;letter-spacing:0.000px;left:224.5px;width:36px;text-align:center;">11</div>
<div class="t" id="t118" style="right:1125.1px;top:487px;font-size:13.5px;color:#333;letter-spacing:0.000px;font-style:italic;">1011</div>
<div class="t" id="t119" style="right:927.7px;top:487px;font-size:13.5px;color:#333;letter-spacing:0.200px;font-style:italic;">7/11/2023 12:00:00 AM</div>
<div class="t" id="t120" style="left:616.1px;top:487px;font-size:13.5px;color:#333;letter-spacing:-0.266px;">Jay Smithers</div>
<div class="t" id="t121" style="right:533.8px;top:487px;font-size:13.5px;color:#333;letter-spacing:0.200px;font-style:italic;">70.25</div>
<div class="t" id="t122" style="left:1010.8px;top:487px;font-size:13.5px;color:#2a7a50;letter-spacing:-0.020px;">Table</div>
<div class="t" id="t123" style="top:514px;font-size:14.5px;color:#3a3a3a;letter-spacing:0.000px;left:224.5px;width:36px;text-align:center;">12</div>
<div class="t" id="t124" style="right:1125.1px;top:513px;font-size:13.5px;color:#333;letter-spacing:0.000px;font-style:italic;">1012</div>
<div class="t" id="t125" style="right:927.7px;top:513px;font-size:13.5px;color:#333;letter-spacing:0.200px;font-style:italic;">7/12/2023 12:00:00 AM</div>
<div class="t" id="t126" style="left:616.1px;top:513px;font-size:13.5px;color:#333;letter-spacing:-0.307px;">J Smithers</div>
<div class="t" id="t127" style="right:533.8px;top:513px;font-size:13.5px;color:#333;letter-spacing:0.200px;font-style:italic;">55.75</div>
<div class="t" id="t128" style="left:1010.8px;top:513px;font-size:13.5px;color:#2a7a50;letter-spacing:-0.020px;">Table</div>
<div class="t" id="t129" style="left:1227.3px;top:204px;font-size:23.5px;color:#3f8a6c;letter-spacing:-0.387px;">Query Settings</div>
<div class="t" id="t130" style="left:1238.3px;top:250px;font-size:14px;color:#1e6a42;letter-spacing:-0.528px;font-weight:bold;">PROPERTIES</div>
<div class="t" id="t131" style="left:1238.3px;top:275px;font-size:14px;color:#333;letter-spacing:0.280px;">Name</div>
<div class="t" id="t132" style="left:1246.0px;top:301px;font-size:14px;color:#666;letter-spacing:-0.374px;">Merge1</div>
<div class="t" id="t133" style="left:1238.3px;top:333px;font-size:14px;color:#2b5e9e;letter-spacing:0.264px;">All Properties</div>
<div class="t" id="t134" style="left:1238.3px;top:374px;font-size:14px;color:#1e6a42;letter-spacing:-0.439px;font-weight:bold;">APPLIED STEPS</div>
<div class="t" id="t135" style="left:1264.2px;top:405px;font-size:14px;color:#333;letter-spacing:-0.012px;">Source</div>
<div class="t" id="t136" style="left:6.3px;top:1001px;font-size:13.5px;color:#fff;letter-spacing:-0.490px;">5 COLUMNS, 12 ROWS</div>
<div class="t" id="t137" style="left:164.0px;top:1001px;font-size:13.5px;color:#fff;letter-spacing:0.095px;">Column profiling based on top 1000 rows</div>
<div class="t" id="t138" style="left:1299.0px;top:1001px;font-size:13.5px;color:#fff;letter-spacing:-0.511px;">PREVIEW DOWNLOADED AT 12:41 PM</div>
</body>
</html>
